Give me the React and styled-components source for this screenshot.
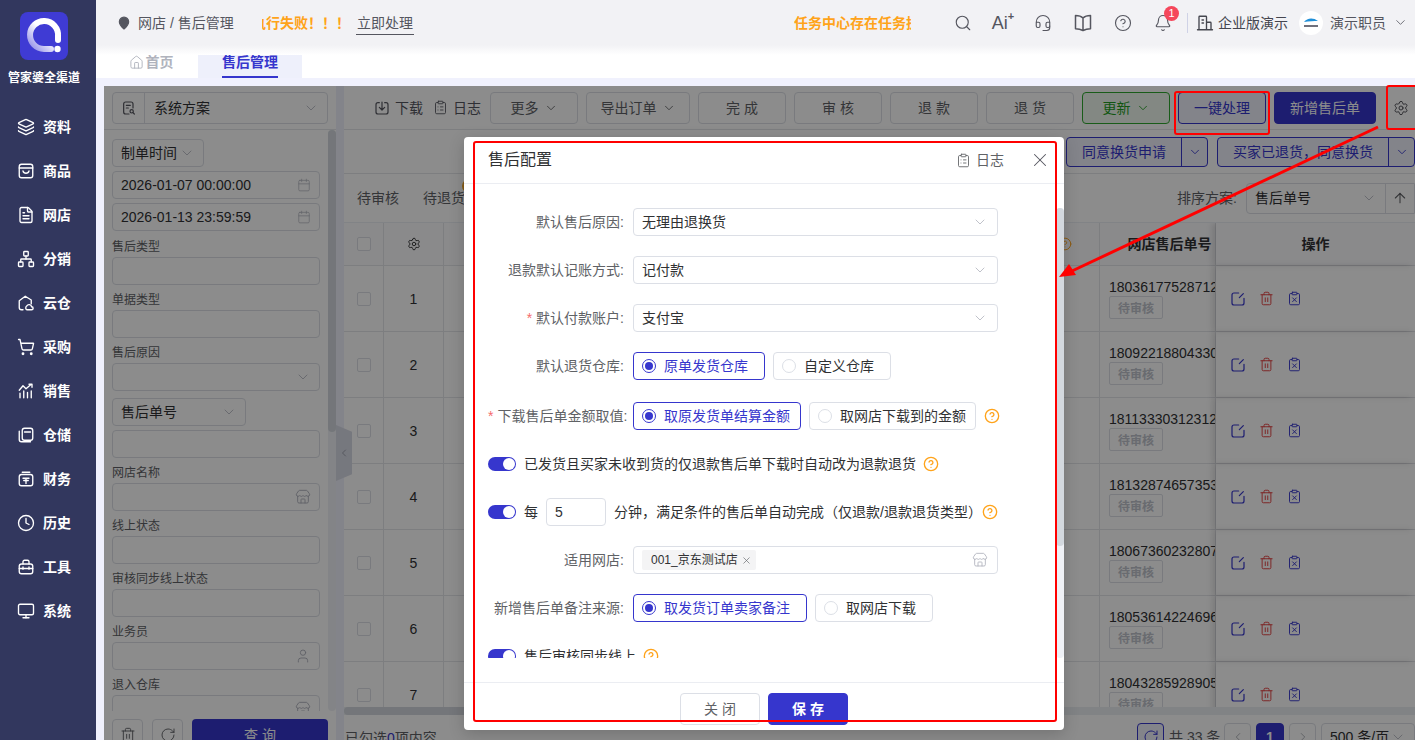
import styled, { createGlobalStyle } from 'styled-components'
import {
  ArrowUp,
  Bell,
  Calendar,
  ChevronDown,
  ChevronLeft,
  ChevronRight,
  CircleHelp,
  ClipboardList,
  ClipboardX,
  Clock,
  FileText,
  Headset,
  Home,
  Layers,
  MapPin,
  Monitor,
  Network,
  RotateCw,
  Search,
  Settings,
  ShoppingCart,
  Store,
  Trash2,
  User,
  X,
} from 'lucide-react'

const PRIMARY = '#3636cd'
const ORANGE = '#ffa31a'
const FONT = '"Liberation Sans", "Noto Sans CJK SC", sans-serif'

const GlobalStyle = createGlobalStyle`
  html, body {
    margin: 0;
    height: 100%;
    overflow: hidden;
    font-family: ${FONT};
    font-size: 14px;
    line-height: 20px;
    color: #303133;
  }
  * {
    box-sizing: border-box;
  }
`

const Page = styled.div`
  position: relative;
  display: flex;
  width: 100%;
  height: 100vh;
  overflow: hidden;
  background: #fff;
`

/* sidebar */

const Sidebar = styled.aside`
  width: 96px;
  flex-shrink: 0;
  background: #32375e;
  color: #fff;
  display: flex;
  flex-direction: column;
  align-items: center;
  padding-top: 12px;
`

const LogoBox = styled.div`
  width: 48px;
  height: 48px;
  margin-right: 8px;
`

const BrandName = styled.div`
  font-size: 12px;
  font-weight: 700;
  line-height: 18px;
  margin: 9px 8px 18px 0;
  white-space: nowrap;
`

const NavItem = styled.div`
  width: 100%;
  height: 44px;
  display: flex;
  align-items: center;
  padding-left: 17px;
  gap: 8px;
  font-weight: 700;
  font-size: 14px;
  flex-shrink: 0;
`

/* header */

const Main = styled.div`
  flex: 1;
  min-width: 0;
  display: flex;
  flex-direction: column;
`

const TopBar = styled.header`
  height: 45px;
  flex-shrink: 0;
  background: #f2f2f5;
  display: flex;
  align-items: center;
  padding-left: 21px;
  color: #55565f;
  font-size: 14px;
`

const TopFade = styled.div`
  height: 10px;
  margin-bottom: -10px;
  position: relative;
  background: linear-gradient(#f2f2f5, #fff);
`

const Crumb = styled.div`
  display: flex;
  align-items: center;
  gap: 7px;
  width: 145px;
  white-space: nowrap;
`

const Ticker = styled.div`
  width: ${({ $w }) => $w}px;
  margin-left: ${({ $left }) => $left || 0}px;
  overflow: hidden;
  white-space: nowrap;
  color: ${ORANGE};
  font-weight: 700;
  font-size: 14px;
  flex-shrink: 0;
`

const TickerText = styled.span`
  display: inline-block;
  margin-left: ${({ $shift }) => $shift || 0}px;
`

const HandleLink = styled.span`
  margin-left: 6px;
  padding: 0 1px 1px;
  border-bottom: 1px solid #55565f;
  line-height: 20px;
  margin-top: 2px;
`

const TopRight = styled.div`
  margin-left: auto;
  display: flex;
  align-items: center;
  padding-right: 7px;
`

const TopIcon = styled.div`
  position: relative;
  width: 40px;
  height: 24px;
  display: flex;
  align-items: center;
  justify-content: center;
  color: #55565f;
`

const AiMark = styled.span`
  font-size: 18px;
  line-height: 24px;
`

const AiPlus = styled.span`
  font-size: 11px;
  line-height: 10px;
  align-self: flex-start;
  font-weight: 700;
`

const RedDot = styled.span`
  position: absolute;
  top: -5px;
  right: 4px;
  width: 15px;
  height: 15px;
  border-radius: 50%;
  background: #f5475b;
  color: #fff;
  font-size: 11px;
  line-height: 15px;
  text-align: center;
`

const TopDivider = styled.span`
  width: 1px;
  height: 20px;
  background: #cfd2e6;
  margin: 0 8px 0 4px;
`

const Company = styled.div`
  display: flex;
  align-items: center;
  gap: 4px;
  margin-right: 11px;
  white-space: nowrap;
  color: #45464f;
`

const Avatar = styled.svg`
  width: 24px;
  height: 24px;
  margin-right: 7px;
`

const UserCaret = styled(ChevronDown)`
  margin-left: 7px;
`

const TabBar = styled.nav`
  height: 33px;
  flex-shrink: 0;
  display: flex;
  align-items: flex-end;
  padding-left: 8px;
  background: #fff;
`

const HomeTab = styled.div`
  width: 94px;
  height: 32px;
  display: flex;
  align-items: center;
  justify-content: center;
  gap: 2px;
  color: #b0b3bd;
  font-weight: 700;
`

const ActiveTab = styled.div`
  width: 104px;
  height: 32px;
  background: #eef0fb;
  border-radius: 8px 8px 0 0;
  display: flex;
  justify-content: center;
`

const ActiveTabLabel = styled.span`
  height: 32px;
  line-height: 33px;
  color: ${PRIMARY};
  font-weight: 700;
  border-bottom: 2px solid ${PRIMARY};
`

/* workspace */

const Workspace = styled.div`
  flex: 1;
  min-height: 0;
  background: #f0f1fd;
  padding: 8px 0 0 8px;
`

const Split = styled.div`
  position: relative;
  display: flex;
  height: 100%;
  background: #fff;
  overflow: hidden;
`

const FilterPanel = styled.div`
  width: 232px;
  flex-shrink: 0;
  display: flex;
  flex-direction: column;
`

const SchemeRow = styled.div`
  height: 44px;
  flex-shrink: 0;
  padding: 6px 8px;
  border-bottom: 1px solid #e4e5ea;
`

const SchemeSelect = styled.div`
  height: 32px;
  border: 1px solid #dcdfe6;
  border-radius: 4px;
  display: flex;
  align-items: center;
  padding-right: 8px;
`

const SchemeIcon = styled.div`
  width: 32px;
  height: 100%;
  border-right: 1px solid #dcdfe6;
  display: flex;
  align-items: center;
  justify-content: center;
  margin-right: 9px;
  color: #55565f;
`

const SchemeCaret = styled.span`
  margin-left: auto;
  display: flex;
`

const FilterBody = styled.div`
  flex: 1;
  min-height: 0;
  display: flex;
`

const FilterScroll = styled.div`
  flex: 1;
  padding: 9px 8px 0;
  overflow: hidden;
  display: flex;
  flex-direction: column;
`

const ScrollTrack = styled.div`
  width: 8px;
  flex-shrink: 0;
  background: #eff1f6;
  border-radius: 4px;
`

const ScrollThumb = styled.div`
  height: ${({ $h }) => $h}px;
  background: #d3d8de;
  border-radius: 4px;
`

const Control = styled.div`
  height: 28px;
  flex-shrink: 0;
  width: ${({ $w }) => ($w ? `${$w}px` : '100%')};
  margin-top: ${({ $top }) => $top || 0}px;
  margin-bottom: ${({ $bottom }) => ($bottom === undefined ? 4 : $bottom)}px;
  border: 1px solid #dcdfe6;
  border-radius: 4px;
  display: flex;
  align-items: center;
  justify-content: space-between;
  padding: 0 8px;
  color: #303133;
  white-space: nowrap;
`

const FieldLabel = styled.div`
  font-size: 12px;
  line-height: 18px;
  flex-shrink: 0;
  margin: 2px 0 1px;
  color: #606266;
`

const FilterFooter = styled.div`
  height: 29px;
  flex-shrink: 0;
  display: flex;
  gap: 9px;
  padding: 8px 8px 0;
`

const SquareButton = styled.div`
  width: 31px;
  height: 32px;
  border: 1px solid #dcdfe6;
  border-radius: 4px;
  display: flex;
  align-items: center;
  justify-content: center;
  color: #606266;
`

const QueryButton = styled.div`
  width: 136px;
  height: 32px;
  background: ${PRIMARY};
  color: #fff;
  border-radius: 4px;
  text-align: center;
  line-height: 32px;
`

const Gutter = styled.div`
  width: 8px;
  flex-shrink: 0;
  background: #eef0fb;
`

const CollapseHandle = styled.div`
  position: absolute;
  left: 232px;
  top: 339px;
  width: 16px;
  height: 56px;
  background: #d8dae6;
  clip-path: polygon(0 0, 100% 12%, 100% 88%, 0 100%);
  display: flex;
  align-items: center;
  justify-content: center;
  color: #8a8c99;
`

const ListPanel = styled.div`
  flex: 1;
  min-width: 0;
  display: flex;
  flex-direction: column;
`

const Toolbar = styled.div`
  height: 44px;
  flex-shrink: 0;
  border-bottom: 1px solid #e4e5ea;
  display: flex;
  align-items: center;
  justify-content: flex-end;
  gap: 8px;
`

const LinkAction = styled.div`
  display: flex;
  align-items: center;
  gap: 5px;
  margin-right: ${({ $right }) => $right || 0}px;
  color: #55565f;
  white-space: nowrap;
`

const Button = styled.div`
  width: ${({ $w }) => $w}px;
  height: 32px;
  flex-shrink: 0;
  display: flex;
  align-items: center;
  justify-content: center;
  gap: 5px;
  border: 1px solid ${({ $border }) => $border || '#dcdfe6'};
  border-radius: 4px;
  background: ${({ $bg }) => $bg || '#fff'};
  color: ${({ $color }) => $color || '#606266'};
  font-weight: ${({ $bold }) => ($bold ? 700 : 400)};
  white-space: pre;
`

const GearSlot = styled.div`
  width: 29px;
  margin-left: 2px;
  display: flex;
  justify-content: center;
  color: #4a4a52;
`

const ActionRow = styled.div`
  height: 44px;
  flex-shrink: 0;
  border-bottom: 1px solid #e4e5ea;
  display: flex;
  align-items: flex-start;
  justify-content: flex-end;
  padding-top: 7px;
  gap: 9px;
`

const SplitButton = styled.div`
  display: flex;
  width: ${({ $w }) => $w}px;
  height: 30px;
  flex-shrink: 0;
  border: 1px solid ${PRIMARY};
  border-radius: 4px;
  background: #eef0fb;
  color: ${PRIMARY};
`

const SplitLabel = styled.div`
  flex: 1;
  text-align: center;
  line-height: 28px;
  white-space: nowrap;
`

const SplitArrow = styled.div`
  width: 26px;
  border-left: 1px solid ${PRIMARY};
  display: flex;
  align-items: center;
  justify-content: center;
`

const StatusRow = styled.div`
  height: 48px;
  flex-shrink: 0;
  display: flex;
  align-items: center;
  padding-left: 13px;
  color: #606266;
`

const StatusTab = styled.span`
  position: relative;
  margin-right: 24px;
  white-space: nowrap;
`

const StatusBadge = styled.span`
  position: absolute;
  right: -11px;
  top: -9px;
  width: 14px;
  height: 14px;
  border-radius: 50%;
  background: #f5a623;
`

const SortBox = styled.div`
  margin-left: auto;
  display: flex;
  align-items: center;
`

const SortSelect = styled.div`
  width: 169px;
  height: 31px;
  margin-left: 9px;
  border: 1px solid #dcdfe6;
  border-radius: 4px 0 0 4px;
  display: flex;
  align-items: center;
  padding-left: 8px;
  color: #303133;
`

const SortValue = styled.div`
  width: 130px;
  display: flex;
  align-items: center;
  justify-content: space-between;
  padding-right: 8px;
`

const SortArrow = styled.div`
  flex: 1;
  height: 100%;
  border-left: 1px solid #dcdfe6;
  display: flex;
  align-items: center;
  justify-content: center;
  color: #606266;
`

const TableBox = styled.div`
  flex: 1;
  min-height: 0;
  overflow: hidden;
  border-top: 1px solid #ebeef5;
`

const TableRow = styled.div`
  display: grid;
  grid-template-columns: 40px 60px 656px 116px 199px;
  height: ${({ $h }) => $h}px;
  border-bottom: 1px solid #e4e5ea;
`

const Cell = styled.div`
  border-right: 1px solid #e4e5ea;
  display: flex;
  align-items: center;
  justify-content: center;
  overflow: hidden;
`

const HeadCell = styled(Cell)`
  background: #fbfbfd;
  font-weight: 700;
  white-space: nowrap;
`

const TailHeadCell = styled(HeadCell)`
  justify-content: flex-end;
  padding-right: 27px;
  color: ${ORANGE};
`

const OrderHeadCell = styled(HeadCell)`
  padding-left: 24px;
`

const OrderCell = styled(Cell)`
  flex-direction: column;
  align-items: flex-start;
  padding-left: 9px;
`

const OpHeadCell = styled(HeadCell)`
  border-right: 0;
  box-shadow: -4px 0 6px rgba(0, 0, 0, 0.12);
`

const OpCell = styled(Cell)`
  border-right: 0;
  justify-content: flex-start;
  padding-left: 14px;
  gap: 13px;
  box-shadow: -4px 0 6px rgba(0, 0, 0, 0.12);
`

const Check = styled.span`
  width: 14px;
  height: 14px;
  border: 1px solid #dcdfe6;
  border-radius: 2px;
  background: #fff;
`

const OrderNo = styled.div`
  line-height: 18px;
  white-space: nowrap;
`

const PendingBadge = styled.div`
  width: 54px;
  height: 23px;
  border: 1px solid #dcdfe6;
  border-radius: 2px;
  color: #c0c4cc;
  font-size: 12px;
  font-weight: 700;
  text-align: center;
  line-height: 24px;
`

const HScroll = styled.div`
  height: 8px;
  flex-shrink: 0;
  background: #eceef2;
`

const HScrollThumb = styled.div`
  width: 700px;
  height: 100%;
  background: #d3d8de;
  border-radius: 4px;
`

const ListFooter = styled.div`
  height: 25px;
  flex-shrink: 0;
  overflow: hidden;
  display: flex;
  padding-top: 8px;
  line-height: 28px;
  color: #606266;
  white-space: nowrap;
`

const Selected = styled.span`
  flex: 1;
  margin-left: 1px;
  line-height: 30px;
`

const SelectedCount = styled.span`
  color: ${PRIMARY};
`

const Pager = styled.div`
  display: flex;
  gap: 5px;
  align-items: flex-start;
`

const PageButton = styled.div`
  width: ${({ $w }) => $w || 27}px;
  height: 28px;
  border: 1px solid ${({ $active, $accent }) => ($active || $accent ? PRIMARY : '#dcdfe6')};
  border-radius: 4px;
  background: ${({ $active, $accent }) => ($active ? PRIMARY : $accent ? '#eef0fb' : '#fff')};
  color: ${({ $active, $accent }) => ($active ? '#fff' : $accent ? PRIMARY : '#a8abb2')};
  display: flex;
  align-items: center;
  justify-content: center;
  font-weight: ${({ $active }) => ($active ? 700 : 400)};
`

const PageTotal = styled.span`
  line-height: 28px;
  width: 50px;
  text-align: center;
`

const PageSize = styled.div`
  width: 94px;
  height: 28px;
  border: 1px solid #dcdfe6;
  border-radius: 4px;
  display: flex;
  align-items: center;
  justify-content: space-between;
  padding: 0 8px;
  color: #303133;
`

const Mask = styled.div`
  position: absolute;
  inset: 0;
  background: rgba(0, 0, 0, 0.45);
`

/* dialog */

const Dialog = styled.section`
  position: absolute;
  left: 464px;
  top: 137px;
  width: 600px;
  height: 593px;
  background: #fff;
  border-radius: 4px;
  box-shadow: 0 4px 16px rgba(0, 0, 0, 0.18);
  display: flex;
  flex-direction: column;
`

const DialogHead = styled.div`
  height: 47px;
  flex-shrink: 0;
  border-bottom: 1px solid #ebedf2;
  display: flex;
  align-items: center;
  padding: 0 13px 0 24px;
`

const DialogTitle = styled.h2`
  margin: 0;
  font-size: 16px;
  line-height: 22px;
  font-weight: 400;
  color: #303133;
  flex: 1;
`

const LogLink = styled.div`
  display: flex;
  align-items: center;
  gap: 5px;
  color: #606266;
  margin-right: 25px;
`

const DialogBody = styled.div`
  height: 498px;
  flex-shrink: 0;
  display: flex;
  align-items: flex-start;
`

const FormScroll = styled.div`
  flex: 1;
  height: 474px;
  overflow: hidden;
  padding: 24px 0 0 24px;
`

const DialogTrack = styled(ScrollTrack)`
  margin-top: 24px;
  height: 450px;
`

const FormRow = styled.div`
  display: flex;
  align-items: center;
  height: 28px;
  margin-bottom: ${({ $gap }) => $gap || 20}px;
  white-space: nowrap;
  color: #303133;
`

const FormLabel = styled.label`
  width: 136px;
  margin-right: 9px;
  text-align: right;
  color: #606266;
  flex-shrink: 0;
`

const Star = styled.span`
  color: #f56c6c;
  margin-right: 4px;
`

const FormSelect = styled.div`
  width: 365px;
  height: 28px;
  border: 1px solid #dcdfe6;
  border-radius: 4px;
  display: flex;
  align-items: center;
  justify-content: space-between;
  padding: 0 9px 0 8px;
  color: #303133;
`

const RadioCard = styled.div`
  height: 28px;
  display: flex;
  align-items: center;
  gap: 8px;
  margin-right: 8px;
  padding: 0 ${({ $right }) => $right || 16}px 0 8px;
  border: 1px solid ${({ $on }) => ($on ? PRIMARY : '#dcdfe6')};
  border-radius: 4px;
  color: ${({ $on }) => ($on ? PRIMARY : '#303133')};
`

const RadioDot = styled.span`
  width: 14px;
  height: 14px;
  border-radius: 50%;
  border: 1px solid ${({ $on }) => ($on ? PRIMARY : '#dcdfe6')};
  display: flex;
  align-items: center;
  justify-content: center;
  &::after {
    content: '';
    width: 8px;
    height: 8px;
    border-radius: 50%;
    background: ${({ $on }) => ($on ? PRIMARY : 'transparent')};
  }
`

const Toggle = styled.span`
  width: 28px;
  height: 14px;
  flex-shrink: 0;
  border-radius: 7px;
  background: ${PRIMARY};
  margin-right: 8px;
  display: flex;
  justify-content: flex-end;
  &::after {
    content: '';
    width: 12px;
    height: 12px;
    margin: 1px;
    border-radius: 50%;
    background: #fff;
  }
`

const Hint = styled.span`
  display: inline-flex;
  color: ${ORANGE};
  margin-left: ${({ $left }) => $left || 0}px;
`

const MinutesInput = styled.div`
  width: 60px;
  height: 28px;
  border: 1px solid #dcdfe6;
  border-radius: 4px;
  margin: 0 8px;
  padding-left: 8px;
  line-height: 26px;
`

const ShopTag = styled.span`
  height: 20px;
  display: flex;
  align-items: center;
  gap: 3px;
  background: #f4f4f5;
  border-radius: 2px;
  padding: 0 4px 0 9px;
  font-size: 12px;
  color: #303133;
`

const DialogFoot = styled.div`
  height: 48px;
  flex-shrink: 0;
  border-top: 1px solid #ebedf2;
  display: flex;
  justify-content: center;
  gap: 8px;
  padding-top: 10px;
`

const FootButton = styled(Button)`
  width: 80px;
`

/* annotations drawn on top of the screenshot */

const RedBox = styled.div`
  position: absolute;
  left: ${({ $x }) => $x}px;
  top: ${({ $y }) => $y}px;
  width: ${({ $w }) => $w}px;
  height: ${({ $h }) => $h}px;
  border: 2px solid #ff0000;
  border-radius: 3px;
  pointer-events: none;
`

const ArrowLayer = styled.svg`
  position: absolute;
  left: 0;
  top: 0;
  width: 1415px;
  height: 740px;
  pointer-events: none;
`

const Logo = () => (
  <svg width="48" height="48" viewBox="0 0 48 48">
    <defs>
      <linearGradient id="ring" x1="0" y1="1" x2="1" y2="0">
        <stop offset="0" stopColor="#8f8be8" />
        <stop offset="0.55" stopColor="#fff" />
      </linearGradient>
    </defs>
    <rect width="48" height="48" rx="8" fill="#3f3bd4" />
    <path
      d="M38 28V24A14 14 0 1 0 24 37H31"
      fill="none"
      stroke="url(#ring)"
      strokeWidth="6"
      strokeLinecap="round"
    />
    <circle cx="37.5" cy="37" r="3.2" fill="#fff" />
  </svg>
)

const Glyph = ({ size = 18, children, color }) => (
  <svg
    width={size}
    height={size}
    viewBox="0 0 24 24"
    fill="none"
    stroke={color || 'currentColor'}
    strokeWidth="1.8"
    strokeLinecap="round"
    strokeLinejoin="round"
  >
    {children}
  </svg>
)

const GoodsIcon = () => (
  <Glyph>
    <rect x="3" y="3" width="18" height="18" rx="3" />
    <path d="M3 8h18M8 12c1 4 7 4 8 0" />
  </Glyph>
)

const CloudWarehouseIcon = () => (
  <Glyph>
    <path d="M8 21H6a3 3 0 0 1-3-3V9l8-6 8 5v5" />
    <path d="M13 21a3 3 0 0 1 0-5 3.5 3.5 0 0 1 6.5 1 2 2 0 0 1 0 4z" />
  </Glyph>
)

const SalesIcon = () => (
  <Glyph>
    <path d="M3 11l5-6 4 4 7-6M16 3h4v4" />
    <path d="M4 21v-6M9 21v-9M14 21v-7M19 21v-9" />
  </Glyph>
)

const StorageIcon = () => (
  <Glyph>
    <rect x="7" y="3" width="14" height="16" rx="3" />
    <path d="M3 7v11a3 3 0 0 0 3 3h12M10 8h8" />
  </Glyph>
)

const FinanceIcon = () => (
  <Glyph>
    <rect x="3" y="6" width="18" height="15" rx="3" />
    <path d="M7 3h10M8 11h8M12 11v7M9 14h6" />
  </Glyph>
)

const ToolsIcon = () => (
  <Glyph>
    <rect x="3" y="8" width="18" height="13" rx="3" />
    <path d="M8 8V5a2 2 0 0 1 2-2h4a2 2 0 0 1 2 2v3M3 14h18M8 12v3M16 12v3" />
  </Glyph>
)

const SchemeDocIcon = () => (
  <Glyph size={16}>
    <path d="M12 21H7a3 3 0 0 1-3-3V6a3 3 0 0 1 3-3h8a3 3 0 0 1 3 3v6" />
    <path d="M8 8h6M8 12h3" />
    <circle cx="16" cy="17" r="2.5" />
    <path d="M18 19l2 2" />
  </Glyph>
)

const DownloadBoxIcon = () => (
  <Glyph size={16}>
    <path d="M8 4H6a3 3 0 0 0-3 3v11a3 3 0 0 0 3 3h12a3 3 0 0 0 3-3V7a3 3 0 0 0-3-3h-2" />
    <path d="M12 3v11M8 11l4 4 4-4" />
  </Glyph>
)

const ManualIcon = () => (
  <Glyph size={20}>
    <path d="M12 6c-2-2-5-3-9-3v16c4 0 7 1 9 2 2-1 5-2 9-2V3c-4 0-7 1-9 3zM12 6v15" />
  </Glyph>
)

const BuildingIcon = () => (
  <Glyph size={18}>
    <path d="M4 21V4a1 1 0 0 1 1-1h8a1 1 0 0 1 1 1v17M14 11h5a1 1 0 0 1 1 1v9M2 21h20M8 8h2M8 12h2" />
  </Glyph>
)

const EditIcon = () => (
  <Glyph size={16} color={PRIMARY}>
    <path d="M13 3H6a3 3 0 0 0-3 3v12a3 3 0 0 0 3 3h12a3 3 0 0 0 3-3v-7" />
    <path d="M14 10l6-6" />
  </Glyph>
)

const CompanyLogo = () => (
  <Avatar viewBox="0 0 24 24">
    <circle cx="12" cy="12" r="12" fill="#fff" />
    <path d="M5 11c3-4 9-5 14-1-4 0-9 0-14 1z" fill="#1f8fd8" />
    <rect x="5" y="14" width="14" height="2" fill="#334" opacity="0.7" />
  </Avatar>
)

const NAV_ITEMS = [
  { label: '资料', icon: <Layers size={18} strokeWidth={1.8} /> },
  { label: '商品', icon: <GoodsIcon /> },
  { label: '网店', icon: <FileText size={18} strokeWidth={1.8} /> },
  { label: '分销', icon: <Network size={18} strokeWidth={1.8} /> },
  { label: '云仓', icon: <CloudWarehouseIcon /> },
  { label: '采购', icon: <ShoppingCart size={18} strokeWidth={1.8} /> },
  { label: '销售', icon: <SalesIcon /> },
  { label: '仓储', icon: <StorageIcon /> },
  { label: '财务', icon: <FinanceIcon /> },
  { label: '历史', icon: <Clock size={18} strokeWidth={1.8} /> },
  { label: '工具', icon: <ToolsIcon /> },
  { label: '系统', icon: <Monitor size={18} strokeWidth={1.8} /> },
]

const ORDERS = [
  '18036177528712',
  '18092218804330',
  '18113330312312',
  '18132874657353',
  '18067360232807',
  '18053614224696',
  '18043285928905',
]

const TOOL_BUTTONS = ['完 成', '审 核', '退 款', '退 货']

const FILTERS_TOP = [
  { label: '售后类型' },
  { label: '单据类型' },
  { label: '售后原因', icon: <ChevronDown size={16} strokeWidth={1.2} color="#b0b3bd" /> },
]

const FILTERS_BOTTOM = [
  { label: '网店名称', icon: <Store size={16} strokeWidth={1.4} color="#b0b3bd" /> },
  { label: '线上状态' },
  { label: '审核同步线上状态' },
  { label: '业务员', icon: <User size={16} strokeWidth={1.4} color="#b0b3bd" /> },
  { label: '退入仓库', icon: <Store size={16} strokeWidth={1.4} color="#b0b3bd" /> },
]

const Chevron = () => <ChevronDown size={16} strokeWidth={1.2} color="#b0b3bd" />

const SmallChevron = () => <ChevronDown size={14} strokeWidth={1.5} />

const Filter = ({ label, icon }) => (
  <>
    <FieldLabel>{label}</FieldLabel>
    <Control>
      <span />
      {icon}
    </Control>
  </>
)

const Radio = ({ on, label, right }) => (
  <RadioCard $on={on} $right={right}>
    <RadioDot $on={on} />
    {label}
  </RadioCard>
)

const HelpMark = ({ left }) => (
  <Hint $left={left}>
    <CircleHelp size={16} strokeWidth={2} />
  </Hint>
)

const App = () => {
  return (
    <Page>
      <GlobalStyle />
      <Sidebar>
        <LogoBox>
          <Logo />
        </LogoBox>
        <BrandName>管家婆全渠道</BrandName>
        {NAV_ITEMS.map(({ label, icon }) => (
          <NavItem key={label}>
            {icon}
            {label}
          </NavItem>
        ))}
      </Sidebar>

      <Main>
        <TopBar>
          <Crumb>
            <MapPin size={14} fill="#55565f" color="#55565f" />
            网店 / 售后管理
          </Crumb>
          <Ticker $w={88}>
            <TickerText $shift={-10}>{'执行失败\uFF01\uFF01\uFF01'}</TickerText>
          </Ticker>
          <HandleLink>立即处理</HandleLink>
          <Ticker $w={117} $left={380}>
            任务中心存在任务执行失败
          </Ticker>
          <TopRight>
            <TopIcon>
              <Search size={18} strokeWidth={1.5} />
            </TopIcon>
            <TopIcon>
              <AiMark>Ai</AiMark>
              <AiPlus>+</AiPlus>
            </TopIcon>
            <TopIcon>
              <Headset size={18} strokeWidth={1.5} />
            </TopIcon>
            <TopIcon>
              <ManualIcon />
            </TopIcon>
            <TopIcon>
              <CircleHelp size={18} strokeWidth={1.5} />
            </TopIcon>
            <TopIcon>
              <Bell size={18} strokeWidth={1.5} />
              <RedDot>1</RedDot>
            </TopIcon>
            <TopDivider />
            <Company>
              <BuildingIcon />
              企业版演示
            </Company>
            <CompanyLogo />
            演示职员
            <UserCaret size={15} strokeWidth={1.3} />
          </TopRight>
        </TopBar>
        <TopFade />
        <TabBar>
          <HomeTab>
            <Home size={15} strokeWidth={1.5} />
            首页
          </HomeTab>
          <ActiveTab>
            <ActiveTabLabel>售后管理</ActiveTabLabel>
          </ActiveTab>
        </TabBar>

        <Workspace>
          <Split>
            <FilterPanel>
              <SchemeRow>
                <SchemeSelect>
                  <SchemeIcon>
                    <SchemeDocIcon />
                  </SchemeIcon>
                  系统方案
                  <SchemeCaret>
                    <Chevron />
                  </SchemeCaret>
                </SchemeSelect>
              </SchemeRow>
              <FilterBody>
                <FilterScroll>
                  <Control $w={92}>
                    制单时间
                    <Chevron />
                  </Control>
                  <Control>
                    2026-01-07 00:00:00
                    <Calendar size={14} strokeWidth={1.2} color="#b0b3bd" />
                  </Control>
                  <Control $bottom={5}>
                    2026-01-13 23:59:59
                    <Calendar size={14} strokeWidth={1.2} color="#b0b3bd" />
                  </Control>
                  {FILTERS_TOP.map(({ label, icon }) => (
                    <Filter key={label} label={label} icon={icon} />
                  ))}
                  <Control $w={134} $top={3}>
                    售后单号
                    <Chevron />
                  </Control>
                  <Control />
                  {FILTERS_BOTTOM.map(({ label, icon }) => (
                    <Filter key={label} label={label} icon={icon} />
                  ))}
                </FilterScroll>
                <ScrollTrack>
                  <ScrollThumb $h={302} />
                </ScrollTrack>
              </FilterBody>
              <FilterFooter>
                <SquareButton>
                  <Trash2 size={16} strokeWidth={1.4} />
                </SquareButton>
                <SquareButton>
                  <RotateCw size={16} strokeWidth={1.4} />
                </SquareButton>
                <QueryButton>查 询</QueryButton>
              </FilterFooter>
            </FilterPanel>
            <Gutter />

            <ListPanel>
              <Toolbar>
                <LinkAction $right={2}>
                  <DownloadBoxIcon />
                  下载
                </LinkAction>
                <LinkAction $right={1}>
                  <ClipboardList size={15} strokeWidth={1.4} />
                  日志
                </LinkAction>
                <Button $w={88}>
                  更多
                  <SmallChevron />
                </Button>
                <Button $w={104}>
                  导出订单
                  <SmallChevron />
                </Button>
                {TOOL_BUTTONS.map((label) => (
                  <Button key={label} $w={88}>
                    {label}
                  </Button>
                ))}
                <Button $w={88} $border="#2fa82f" $bg="#eef8ee" $color="#1f9d1f">
                  更新
                  <SmallChevron />
                </Button>
                <Button $w={88} $border={PRIMARY} $bg="#eef0fb" $color={PRIMARY}>
                  一键处理
                </Button>
                <Button $w={102} $border={PRIMARY} $bg={PRIMARY} $color="#fff">
                  新增售后单
                </Button>
                <GearSlot>
                  <Settings size={16} strokeWidth={1.4} />
                </GearSlot>
              </Toolbar>

              <ActionRow>
                <SplitButton $w={142}>
                  <SplitLabel>同意换货申请</SplitLabel>
                  <SplitArrow>
                    <SmallChevron />
                  </SplitArrow>
                </SplitButton>
                <SplitButton $w={198}>
                  <SplitLabel>{'买家已退货\uFF0C同意换货'}</SplitLabel>
                  <SplitArrow>
                    <SmallChevron />
                  </SplitArrow>
                </SplitButton>
              </ActionRow>

              <StatusRow>
                <StatusTab>待审核</StatusTab>
                <StatusTab>
                  待退货
                  <StatusBadge />
                </StatusTab>
                <SortBox>
                  排序方案:
                  <SortSelect>
                    <SortValue>
                      售后单号
                      <Chevron />
                    </SortValue>
                    <SortArrow>
                      <ArrowUp size={16} strokeWidth={1.6} />
                    </SortArrow>
                  </SortSelect>
                </SortBox>
              </StatusRow>

              <TableBox>
                <TableRow $h={43}>
                  <HeadCell>
                    <Check />
                  </HeadCell>
                  <HeadCell>
                    <Settings size={14} strokeWidth={1.6} />
                  </HeadCell>
                  <TailHeadCell>
                    <CircleHelp size={14} strokeWidth={1.6} />
                  </TailHeadCell>
                  <OrderHeadCell>网店售后单号</OrderHeadCell>
                  <OpHeadCell>操作</OpHeadCell>
                </TableRow>
                {ORDERS.map((order, index) => (
                  <TableRow key={order} $h={66}>
                    <Cell>
                      <Check />
                    </Cell>
                    <Cell>{index + 1}</Cell>
                    <Cell />
                    <OrderCell>
                      <OrderNo>{order}</OrderNo>
                      <PendingBadge>待审核</PendingBadge>
                    </OrderCell>
                    <OpCell>
                      <EditIcon />
                      <Trash2 size={15} strokeWidth={1.5} color="#e23c3c" />
                      <ClipboardX size={15} strokeWidth={1.5} color={PRIMARY} />
                    </OpCell>
                  </TableRow>
                ))}
              </TableBox>
              <HScroll>
                <HScrollThumb />
              </HScroll>
              <ListFooter>
                <Selected>
                  已勾选<SelectedCount>0</SelectedCount>项内容
                </Selected>
                <Pager>
                  <PageButton $accent>
                    <RotateCw size={16} strokeWidth={1.5} />
                  </PageButton>
                  <PageTotal>共 33 条</PageTotal>
                  <PageButton>
                    <ChevronLeft size={14} strokeWidth={1.5} />
                  </PageButton>
                  <PageButton $active $w={28}>
                    1
                  </PageButton>
                  <PageButton>
                    <ChevronRight size={14} strokeWidth={1.5} />
                  </PageButton>
                  <PageSize>
                    500 条/页
                    <Chevron />
                  </PageSize>
                </Pager>
              </ListFooter>
            </ListPanel>
            <CollapseHandle>
              <ChevronLeft size={12} strokeWidth={1.5} />
            </CollapseHandle>
            <Mask />
          </Split>
        </Workspace>
      </Main>

      <Dialog>
        <DialogHead>
          <DialogTitle>售后配置</DialogTitle>
          <LogLink>
            <ClipboardList size={15} strokeWidth={1.4} />
            日志
          </LogLink>
          <X size={22} strokeWidth={1.1} color="#55565f" />
        </DialogHead>
        <DialogBody>
          <FormScroll>
            <FormRow>
              <FormLabel>默认售后原因:</FormLabel>
              <FormSelect>
                无理由退换货
                <Chevron />
              </FormSelect>
            </FormRow>
            <FormRow>
              <FormLabel>退款默认记账方式:</FormLabel>
              <FormSelect>
                记付款
                <Chevron />
              </FormSelect>
            </FormRow>
            <FormRow>
              <FormLabel>
                <Star>*</Star>默认付款账户:
              </FormLabel>
              <FormSelect>
                支付宝
                <Chevron />
              </FormSelect>
            </FormRow>
            <FormRow $gap={22}>
              <FormLabel>默认退货仓库:</FormLabel>
              <Radio on label="原单发货仓库" />
              <Radio label="自定义仓库" />
            </FormRow>
            <FormRow>
              <FormLabel>
                <Star>*</Star>下载售后单金额取值:
              </FormLabel>
              <Radio on label="取原发货单结算金额" right={10} />
              <Radio label="取网店下载到的金额" right={9} />
              <HelpMark />
            </FormRow>
            <FormRow>
              <Toggle />
              已发货且买家未收到货的仅退款售后单下载时自动改为退款退货
              <HelpMark left={7} />
            </FormRow>
            <FormRow>
              <Toggle />每
              <MinutesInput>5</MinutesInput>
              {'分钟\uFF0C满足条件的售后单自动完成\uFF08仅退款/退款退货类型\uFF09'}
              <HelpMark />
            </FormRow>
            <FormRow>
              <FormLabel>适用网店:</FormLabel>
              <FormSelect>
                <ShopTag>
                  001_京东测试店
                  <X size={11} strokeWidth={1.4} color="#606266" />
                </ShopTag>
                <Store size={16} strokeWidth={1.3} color="#b0b3bd" />
              </FormSelect>
            </FormRow>
            <FormRow>
              <FormLabel>新增售后单备注来源:</FormLabel>
              <Radio on label="取发货订单卖家备注" />
              <Radio label="取网店下载" />
            </FormRow>
            <FormRow>
              <Toggle />
              售后审核同步线上
              <HelpMark left={7} />
            </FormRow>
          </FormScroll>
          <DialogTrack>
            <ScrollThumb $h={338} />
          </DialogTrack>
        </DialogBody>
        <DialogFoot>
          <FootButton>关 闭</FootButton>
          <FootButton $border={PRIMARY} $bg={PRIMARY} $color="#fff" $bold>
            保 存
          </FootButton>
        </DialogFoot>
      </Dialog>

      <RedBox $x={1174} $y={91} $w={96} $h={44} />
      <RedBox $x={1386} $y={85} $w={40} $h={45} />
      <RedBox $x={473} $y={141} $w={584} $h={581} />
      <ArrowLayer viewBox="0 0 1415 740">
        <line x1="1378" y1="127" x2="1072" y2="271" stroke="#ff0000" strokeWidth="3" />
        <polygon points="1059,277 1069,264 1076,275" fill="#ff0000" />
      </ArrowLayer>
    </Page>
  )
}

export default App
